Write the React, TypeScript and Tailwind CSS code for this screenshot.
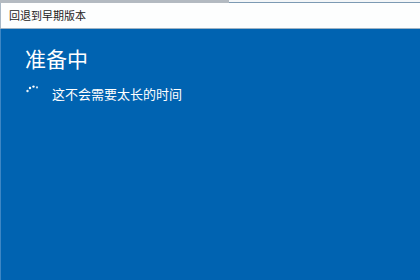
import React from "react";

const font = { fontFamily: '"Noto Sans CJK SC", "Noto Sans", sans-serif' };

const Spinner: React.FC = () => (
  <svg width="14" height="8" viewBox="0 0 14 8" className="-mt-[1px] ml-[1px]">
    <circle cx="1.5" cy="6" r="1.2" fill="#ffffff" opacity="0.9" />
    <circle cx="4" cy="3" r="1.2" fill="#ffffff" />
    <circle cx="7.5" cy="1.6" r="1.2" fill="#ffffff" />
    <circle cx="11" cy="2.4" r="1.1" fill="#ffffff" opacity="0.8" />
  </svg>
);

const App: React.FC = () => {
  return (
    <div className="w-[420px] h-[280px] flex flex-col bg-[#0063b1] overflow-hidden" style={font}>
      {/* window top edge */}
      <div className="flex h-[3px]">
        <div className="w-[229px] bg-[#b3bac1]" />
        <div className="flex-1 flex flex-col">
          <div className="h-[2px] bg-[#f3f6f8]" />
          <div className="h-[1px] bg-[#7c9ab3]" />
        </div>
      </div>
      {/* title bar */}
      <div className="h-[25px] bg-[#fdfefe] flex items-center pl-[8px] border-l border-[#a9b8c6]">
        <span className="text-[11px] text-[#222] leading-none">回退到早期版本</span>
      </div>
      <div className="h-[1px] bg-[#9fb3c4]" />
      {/* content */}
      <div className="flex-1 flex flex-col pl-[24px] pt-[14px] border-l border-[#3d86c4]">
        <div className="text-[21px] leading-[30px] text-white">准备中</div>
        <div className="flex items-start gap-[12px] mt-[13px]">
          <Spinner />
          <span className="text-[13px] leading-[16px] text-white">这不会需要太长的时间</span>
        </div>
      </div>
    </div>
  );
};

export default App;
